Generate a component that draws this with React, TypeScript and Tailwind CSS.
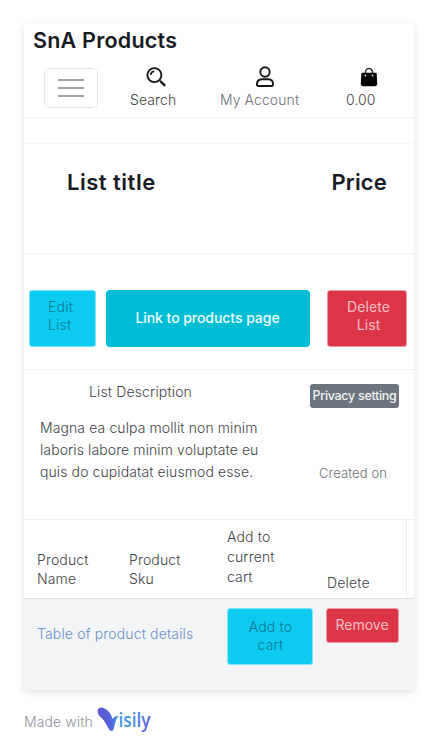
import type { ReactNode } from "react";

function SearchIcon() {
  return (
    <svg width="20" height="20" viewBox="0 0 20 20" fill="none" stroke="#15171b" className="block">
      <circle cx="8.4" cy="8.1" r="7" strokeWidth="1.9" />
      <path d="M4.8 8a3.7 3.7 0 0 1 3.4-3.7" strokeWidth="1.7" />
      <path d="M13.6 13.3l1.3 1.3" strokeWidth="1.4" />
      <path d="M14.6 14.4l4.5 4.5" strokeWidth="2.4" />
    </svg>
  );
}

function UserIcon() {
  return (
    <svg width="20" height="22" viewBox="0 0 20 22" fill="none" stroke="#15171b" strokeWidth="1.9" className="block">
      <circle cx="10" cy="6" r="4.7" />
      <path d="M1.9 18.600c0-3.400 2.200-5.400 5.100-5.400h6c2.900 0 5.100 2 5.100 5.400 0 .9-.5 1.400-1.400 1.400H3.300c-.9 0-1.400-.5-1.400-1.400z" />
    </svg>
  );
}

function BagIcon() {
  return (
    <svg width="18" height="20" viewBox="0 0 18 20" className="block">
      <path d="M5.500 8V5a3.500 3.500 0 0 1 7 0v3" fill="none" stroke="#333" strokeWidth="1.500" />
      <path d="M2.500 5.800h13c.8 0 1.200.5 1.200 1.200l.5 9.600c.1 1.700-.9 2.600-2.500 2.600H3.300c-1.600 0-2.600-.9-2.500-2.600L1.300 7c0-.7.4-1.200 1.200-1.200z" fill="#050505" />
      <circle cx="5.500" cy="8.500" r=".9" fill="#ddd" />
      <circle cx="12.500" cy="8.500" r=".9" fill="#ddd" />
    </svg>
  );
}

function VisilyLogo() {
  return (
    <svg width="56" height="27" viewBox="0 0 56 27" className="block">
      <defs>
        <linearGradient id="mark" x1="0" y1="0" x2="1" y2="0">
          <stop offset="0" stopColor="#6254d0" />
          <stop offset=".62" stopColor="#5263dc" />
          <stop offset="1" stopColor="#38a5e8" />
        </linearGradient>
        <linearGradient id="word" x1="0" y1="0" x2="1" y2="0">
          <stop offset="0" stopColor="#3d9fe8" />
          <stop offset=".55" stopColor="#468be2" />
          <stop offset="1" stopColor="#6258cf" />
        </linearGradient>
      </defs>
      <path d="M.8 5.200C0 1.600 2.800-.2 6.300.9c4.700 1.600 7.800 6 9.400 11 1-2 2.800-3.100 6-3-2.500 2.400-3 5.200-4 9.300-.6 2.900-1 5.400-2.700 5.700-2.200.3-3.300-2.300-5-5.200-2.300-4-3.800-6.500-6.700-8.900C1.900 8.500 1.100 6.900.8 5.200z" fill="url(#mark)" />
      <text x="21.500" y="20" textLength="32" lengthAdjust="spacingAndGlyphs" fontFamily="'Open Sans', sans-serif" fontWeight="600" fontSize="19" fill="url(#word)">isily</text>
    </svg>
  );
}

function Title({ children, className }: { children: ReactNode; className: string }) {
  return <h2 className={`whitespace-nowrap leading-6 font-semibold text-[#171a1f] ${className}`}>{children}</h2>;
}

export default function App() {
  return (
    <div className="h-[754px] w-[438px] bg-white px-6 pt-6 text-sm text-[#424449] [font-family:Inter,'Liberation_Sans',sans-serif] [font-weight:350]">
      <main className="flex h-[666px] w-[390px] flex-col bg-white shadow-[0_2px_7px_rgba(23,26,31,0.13)]">
        <header className="h-[94px] border-b border-[#eeeeef] pt-1">
          <Title className="ml-[9px] text-[21.5px] tracking-[0.22px]">SnA Products</Title>
          <nav className="flex">
            <button className="mt-4 ml-5 flex h-10 w-[54px] shrink-0 flex-col items-center justify-center gap-[6px] rounded-md border border-[#e6e7e9]">
              <i className="h-[2px] w-[26px] bg-[#a2a4aa]" />
              <i className="h-[2px] w-[26px] bg-[#a2a4aa]" />
              <i className="h-[2px] w-[26px] bg-[#a2a4aa]" />
            </button>
            <div className="ml-8 w-[90px] pt-[15px]">
              <div className="ml-4 h-[23px]"><SearchIcon /></div>
              <p className="leading-5 tracking-[0.1px]">Search</p>
            </div>
            <div className="w-[126px] pt-[14px] text-[#6d717a]">
              <div className="ml-[35px] h-6"><UserIcon /></div>
              <p className="leading-5 tracking-[0.08px]">My Account</p>
            </div>
            <div className="pt-[15px]">
              <div className="ml-[14px] h-[23px]"><BagIcon /></div>
              <p className="leading-5 tracking-[0.1px]">0.00</p>
            </div>
          </nav>
        </header>
        <div className="h-[26px] border-b border-[#f8f8f9]" />

        <section className="flex h-[110px] justify-between border-b border-[#eeeeef] pr-[27px] pl-[43px]">
          <Title className="mt-[26px] text-[22px] tracking-[0.5px]">List title</Title>
          <Title className="mt-[26px] text-[22px] tracking-[0.15px]">Price</Title>
        </section>

        <section className="flex h-[116px] border-b border-[#eeeeef] pt-9 pl-[5px]">
          <button className="h-[57px] w-[67px] rounded-[3px] border border-[#7ce3f8] bg-[#0dcaf0] pb-[5px] pl-[18px] text-left leading-[18px] tracking-[0.2px] text-[#087990]">Edit<br />List</button>
          <button className="ml-[10px] h-[57px] w-[204px] rounded bg-[#00bdd6] pr-px pb-[2px] font-medium tracking-[-0.05px] text-[#effdff]">Link to products page</button>
          <button className="ml-[17px] h-[57px] w-20 rounded-[3px] border border-[#f09aa6] bg-[#dc3545] pb-[5px] pl-[3px] leading-[18px] font-normal tracking-[0.1px] text-[#f9bfc7]">Delete<br />List</button>
        </section>

        <section className="flex h-[150px] border-b border-[#eeeeef]">
          <div className="w-[286px] pl-4">
            <h3 className="mt-3 ml-[49px] leading-5 [font-weight:350] tracking-[0.15px]">List Description</h3>
            <p className="mt-[15px] leading-[22px] tracking-[0.1px]">Magna ea culpa mollit non minim<br />laboris labore minim voluptate eu<br />quis do cupidatat eiusmod esse.</p>
          </div>
          <div className="pt-[14px]">
            <span className="flex h-6 w-[89px] items-center justify-center rounded-[3px] bg-[#6c757d] text-[12.5px] font-medium tracking-[-0.3px] whitespace-nowrap text-[#f3f4f6]">Privacy setting</span>
            <p className="mt-[55px] ml-[9px] text-[13px] leading-5 tracking-[0.12px] whitespace-nowrap text-[#6d717a]">Created on</p>
          </div>
        </section>

        <section className="flex h-[79px] border-b border-[#dedfe2]">
          <div className="flex w-[383px] border-r border-[#eeeeef] pl-[13px] tracking-[0.15px]">
            <p className="w-[92px] pt-[30px] leading-[19px]">Product<br />Name</p>
            <p className="w-[98px] pt-[30px] leading-[19px]">Product<br />Sku</p>
            <p className="w-[100px] pt-[7px] leading-5">Add to<br />current<br />cart</p>
            <p className="pt-[53px] leading-5">Delete</p>
          </div>
        </section>

        <section className="flex flex-1 bg-[#f3f4f6] pt-[9px] pl-[13px]">
          <a className="mt-4 w-[190px] leading-5 tracking-[0.15px] whitespace-nowrap text-[#6a8fc8]">Table of product details</a>
          <button className="h-[57px] w-[86px] rounded-[3px] border border-[#7ce3f8] bg-[#0dcaf0] pb-[1px] pl-[1px] leading-[18px] tracking-[0.2px] text-[#087990]">Add to<br />cart</button>
          <button className="ml-[13px] h-[35px] w-[73px] rounded-[3px] border border-[#f09aa6] bg-[#dc3545] pr-[1px] pb-[1px] font-normal text-[#f9bfc7]">Remove</button>
        </section>
      </main>
      <footer className="flex pt-[17px]">
        <span className="mt-[5px] w-[73px] leading-5 tracking-[0.1px] whitespace-nowrap text-[#9194a0]">Made with</span>
        <VisilyLogo />
      </footer>
    </div>
  );
}
